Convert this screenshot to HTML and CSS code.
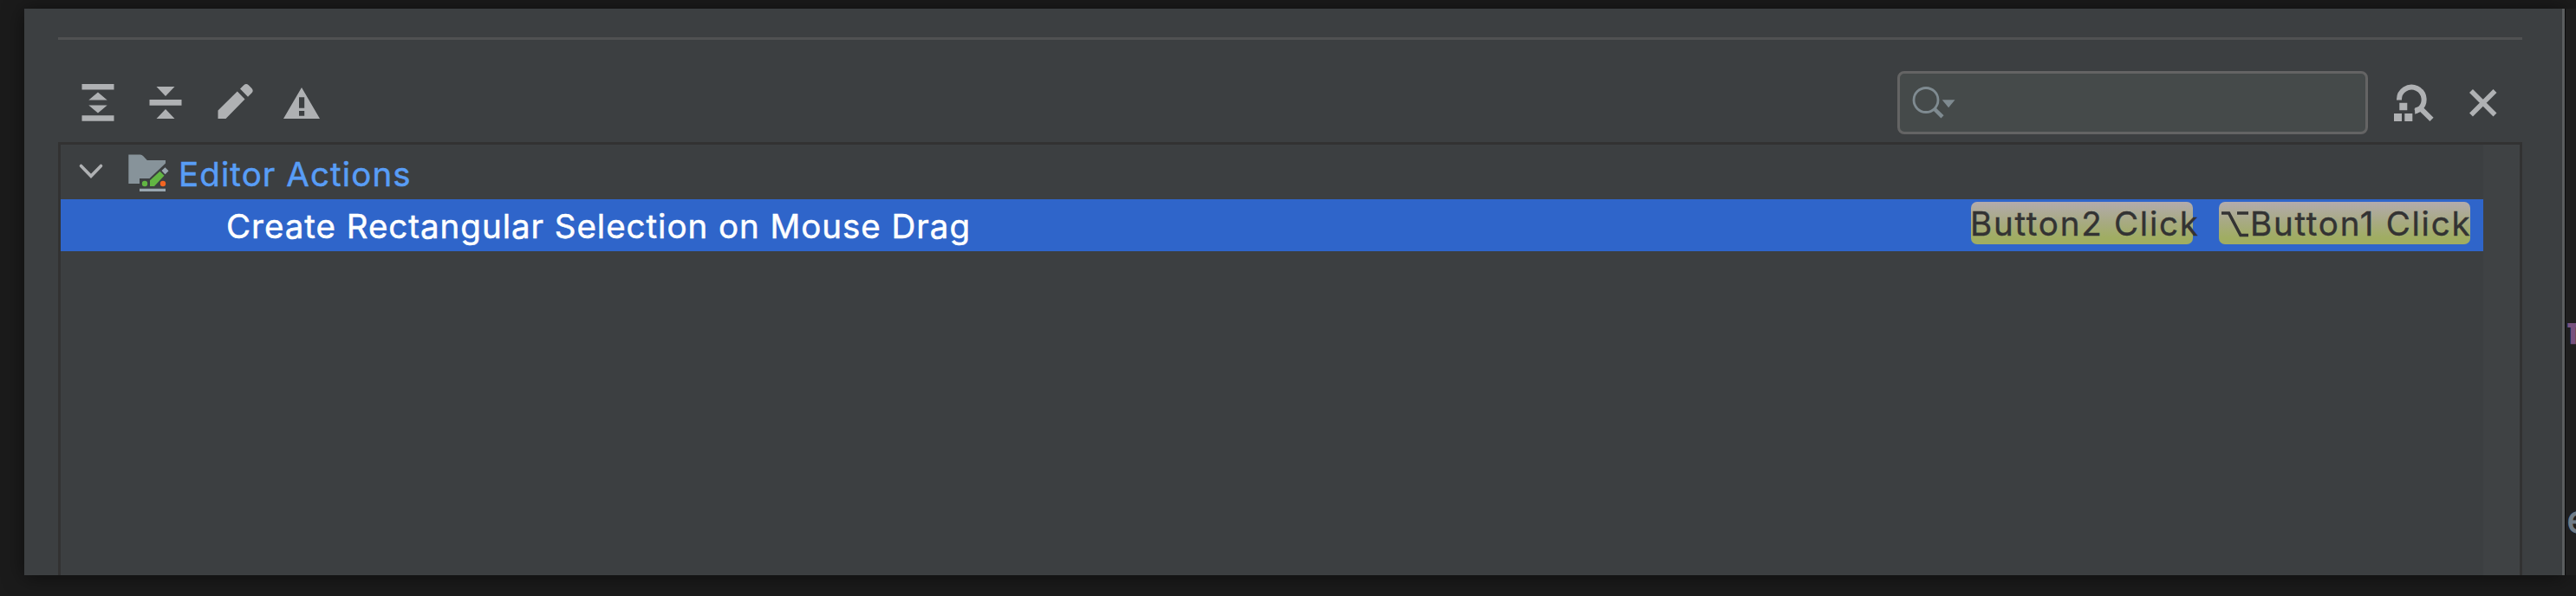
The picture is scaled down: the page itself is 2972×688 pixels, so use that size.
FILE: index.html
```html
<!DOCTYPE html>
<html lang="en">
<head>
<meta charset="utf-8">
<title>Keymap</title>
<link rel="stylesheet" href="styles.css">
</head>
<body>
<main class="dialog">
  <div class="divider"></div>
  <div class="toolbar">
    <div class="actions">
      <svg class="icon" viewBox="88.5 94 48 48"><path d="M94 97h37v6.5H94zM94 133.3h37v6.5H94zM112.5 106.5l10.7 9h-21.4zM112.5 130.5l10.7-9h-21.4z"/></svg>
      <svg class="icon" viewBox="167 94 48 48"><path d="M172.5 115h37v6.8h-37zM191 111l10.5-11h-21zM191 126l10.5 11h-21z"/></svg>
      <svg class="icon" viewBox="245.5 94 48 48"><path d="M251 127.5L273.3 105.5L282 114.5L260 137H251zM276.5 102.5l4.3-4.3q2.7-2.4 5.5 0l3.7 3.7q2.4 3 0 5.3l-4.5 4.5z"/></svg>
      <svg class="icon" viewBox="324 94 48 48"><path fill-rule="evenodd" d="M348 101l21 36h-42zM345 112.2v12.5h6.2v-12.5zM345 128v5.8h6.2V128z"/></svg>
    </div>
    <div class="search">
      <svg class="search-icon" viewBox="2204 94 60 48"><circle cx="2222" cy="115.5" r="14"/><path class="handle" d="M2231.5 125.5l9.5 9.3"/><path class="arrow" d="M2240.7 115.3h14.8l-7.4 9z"/></svg>
    </div>
    <svg class="icon find" viewBox="2758 94 54 48"><path class="stroke" d="M2768 115.5A14.3 14.3 0 1 1 2791 126.3Q2789 127.5 2786.5 128.5M2791 123.5L2805.5 137.8"/><path d="M2786.2 124.5l6-2 2.6 4.5-3.5 2.5-5.1 2.3zM2768.3 118.7h9v8.6h-9zM2762 131h9v9h-9zM2774.3 131h9v9h-9z"/></svg>
    <svg class="icon close" viewBox="2841 94 48 48"><path class="stroke" d="M2851 105l27.5 27.5M2878.5 105L2851 132.5"/></svg>
  </div>
  <section class="tree">
    <div class="rows">
      <div class="row group">
        <svg class="chevron" viewBox="90 185 30 24"><path d="M93.5 191.5l11.5 11.8 11.5-11.8"/></svg>
        <svg class="folder" viewBox="146 176 50 48">
          <path fill="#87939a" d="M148.3 178.5h13.5q2 0 3.5 1.7l4.5 4.8H191v3.5L172.5 206H161v6h-12.7z"/>
          <path fill="#9aa7b0" d="M161 217.8h30v3.2h-30zM186.5 197l4-3.7 4 4-4 4z"/>
          <path fill="#62b543" d="M173 208.3l11.5-10.5 5 5-11.5 12.2h-5z"/>
          <circle fill="#62b543" cx="167" cy="212" r="3.2"/>
          <circle fill="#f26522" cx="188" cy="212" r="3.2"/>
        </svg>
        <span class="group-name">Editor Actions</span>
      </div>
      <div class="row selected">
        <span class="action-name">Create Rectangular Selection on Mouse Drag</span>
        <span class="key key-one">Button2 Click</span>
        <span class="key key-two"><svg class="option" viewBox="0 0 31 30"><path d="M0 2h8.5L22 27.5h9M18 2h13"/></svg>Button1 Click</span>
      </div>
    </div>
    <div class="scrollbar"></div>
  </section>
</main>
<aside class="editor"><span class="code member">π</span><span class="code word">e</span></aside>
</body>
</html>
```
FILE: styles.css
```css
* { box-sizing: border-box; }
body {
  margin: 0;
  width: 2972px;
  height: 688px;
  padding: 10px 0 24px 28px;
  display: flex;
  overflow: hidden;
  background: #1b1b1b;
  font-family: Inter, "Liberation Sans", sans-serif;
}
svg { display: block; flex: none; }
.dialog {
  width: 2931px;
  height: 654px;
  flex: none;
  display: flex;
  flex-direction: column;
  padding: 33px 46px 0 39px;
  background: #3c3f41;
  border-right: 3px solid #5b5e5f;
  box-shadow: 0 2px 22px rgba(0, 0, 0, .5);
}
.divider { flex: none; height: 3px; background: #505152; }
.toolbar {
  flex: none;
  height: 118px;
  padding: 36px 0 0 21.5px;
  display: flex;
}
.actions { display: flex; gap: 30.5px; padding-top: 12px; margin-right: auto; }
.icon { width: 48px; height: 48px; fill: #afb1b3; }
.stroke { fill: none; stroke: #afb1b3; stroke-width: 6; }
.search {
  width: 543px;
  height: 73px;
  padding: 9px 12px;
  border: 3px solid #646464;
  border-radius: 8px;
  background: #454a4a;
}
.search-icon { width: 60px; height: 48px; fill: none; stroke: #7f8b91; stroke-width: 2.8; }
.search-icon .handle { stroke-width: 4.5; }
.search-icon .arrow { fill: #7f8b91; stroke: none; }
.find { width: 54px; margin: 12px 29px 0 26px; }
.close { margin: 12px 21px 0 0; }
.close .stroke { stroke-width: 5.6; }
.tree {
  flex: 1;
  display: flex;
  border: 3px solid #323232;
  border-bottom: 0;
}
.rows { flex: 1; }
.scrollbar { width: 42px; background: #3f4244; }
.row { display: flex; white-space: nowrap; }
.group { height: 63px; padding: 9px 0 0 20px; color: #589df6; }
.chevron { width: 30px; height: 24px; margin-top: 9px; fill: none; stroke: #afb1b3; stroke-width: 3.6; stroke-linecap: round; }
.folder { width: 50px; height: 48px; margin-left: 26px; }
.group-name, .action-name { font-size: 38.5px; line-height: 46px; -webkit-text-stroke: .5px; }
.group-name { margin: 2px 0 0 10px; letter-spacing: 1.1px; }
.selected { height: 60px; padding-left: 191px; background: #2f65ca; color: #fff; }
.action-name { margin: 8px auto 0 0; letter-spacing: .97px; }
.key {
  height: 49px;
  margin-top: 3px;
  display: flex;
  border-radius: 7px;
  background: linear-gradient(#b3abad, #a7aa80 50%, #a0ad62 85%);
  color: #333;
  font-size: 38.5px;
  line-height: 50px;
  letter-spacing: 1.75px;
  -webkit-text-stroke: .4px;
}
.key-one { width: 256px; margin-right: 30px; text-indent: -1px; }
.key-two { width: 290px; margin-right: 15px; padding-left: 3px; }
.option { width: 31px; height: 30px; margin: 11px 2px 0 0; fill: none; stroke: #333; stroke-width: 3.6; }
.editor { width: 13px; flex: none; padding: 347px 0 0 2px; border-left: 1px solid #0c0c0c; background: #1f1f1f; overflow: hidden; }
.code { display: block; font: 44px/50px "DejaVu Sans Mono", monospace; }
.member { color: #77527f; font-weight: bold; }
.word { margin-top: 168px; margin-left: -1px; color: #717d88; -webkit-text-stroke: 1px; }
```
